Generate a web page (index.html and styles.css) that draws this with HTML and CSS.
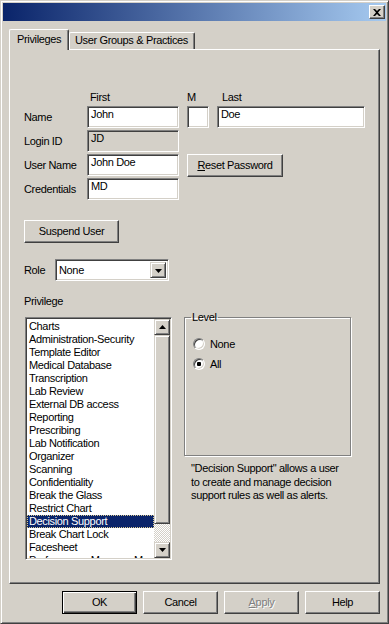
FILE: index.html
```html
<!DOCTYPE html>
<html lang="en">
<head>
    <meta charset="UTF-8">
    <meta name="viewport" content="width=device-width, initial-scale=1.0">
    <title>User Properties</title>
    <link rel="stylesheet" href="styles.css">
</head>
<body>
    <div class="window">
        <div class="titlebar">
            <span class="close">
                <svg width="8" height="7" viewBox="0 0 8 7"><path d="M0 0h2l2 2 2-2h2L5 3.5 8 7H6L4 5 2 7H0l3-3.5z" fill="#000"/></svg>
            </span>
        </div>

        <div class="tabs">
            <div class="tab active">Privileges</div>
            <div class="tab">User Groups &amp; Practices</div>
        </div>

        <div class="panel">
            <div class="ident">
                <span></span>
                <span class="head first-head">First</span>
                <span class="head">M</span>
                <span class="head last-head">Last</span>

                <label>Name</label>
                <div class="field w-first">John</div>
                <div class="field w-mid"></div>
                <div class="field w-last">Doe</div>

                <label>Login ID</label>
                <div class="field w-first disabled">JD</div>

                <label>User Name</label>
                <div class="field w-first">John Doe</div>
                <button type="button" class="btn reset"><u>R</u>eset Password</button>

                <label>Credentials</label>
                <div class="field w-first">MD</div>
            </div>

            <button type="button" class="btn suspend">Suspend User</button>

            <div class="role">
                <label>Role</label>
                <div class="select">
                    <span class="select-text">None</span>
                    <span class="arrow-btn">
                        <svg width="7" height="4" viewBox="0 0 7 4"><path d="M0 0h7L3.5 4z" fill="#000"/></svg>
                    </span>
                </div>
            </div>

            <div class="priv-label">Privilege</div>

            <div class="priv-row">
                <div class="listbox">
                    <ul class="items">
                        <li>Charts</li>
                        <li>Administration-Security</li>
                        <li>Template Editor</li>
                        <li>Medical Database</li>
                        <li>Transcription</li>
                        <li>Lab Review</li>
                        <li>External DB access</li>
                        <li>Reporting</li>
                        <li>Prescribing</li>
                        <li>Lab Notification</li>
                        <li>Organizer</li>
                        <li>Scanning</li>
                        <li>Confidentiality</li>
                        <li>Break the Glass</li>
                        <li>Restrict Chart</li>
                        <li class="selected">Decision Support</li>
                        <li>Break Chart Lock</li>
                        <li>Facesheet</li>
                        <li>Performance Measure Manager</li>
                    </ul>
                    <div class="scrollbar">
                        <span class="sb-btn">
                            <svg width="7" height="4" viewBox="0 0 7 4"><path d="M0 4h7L3.5 0z" fill="#000"/></svg>
                        </span>
                        <span class="sb-thumb"></span>
                        <span class="sb-track"></span>
                        <span class="sb-btn">
                            <svg width="7" height="4" viewBox="0 0 7 4"><path d="M0 0h7L3.5 4z" fill="#000"/></svg>
                        </span>
                    </div>
                </div>

                <div class="right-col">
                    <fieldset class="level">
                        <legend>Level</legend>
                        <div class="radio-row"><span class="radio"></span>None</div>
                        <div class="radio-row"><span class="radio checked"></span>All</div>
                    </fieldset>
                    <p class="desc">"Decision Support" allows a user<br>to create and manage decision<br>support rules as well as alerts.</p>
                </div>
            </div>
        </div>

        <div class="actions">
            <button type="button" class="btn default">OK</button>
            <button type="button" class="btn">Cancel</button>
            <button type="button" class="btn" disabled><u>A</u>pply</button>
            <button type="button" class="btn">Help</button>
        </div>
    </div>
</body>
</html>
```

FILE: styles.css
```css
*{
    box-sizing: border-box;
}
body{
    margin: 0;
    font-family: "Liberation Sans", Arial, sans-serif;
    font-size: 11px;
    letter-spacing: -0.35px;
    color: #000;
}
.window{
    width: 389px;
    height: 624px;
    background-color: #d4d0c8;
    border: 1px solid;
    border-color: #d4d0c8 #404040 #404040 #d4d0c8;
    box-shadow: inset 1px 1px #fff, inset -1px -1px #808080;
    padding: 2px;
}

/* title bar */
.titlebar{
    height: 18px;
    background: linear-gradient(to right, #0a246a, #a6caf0);
    display: flex;
    justify-content: flex-end;
    align-items: center;
    padding-right: 1px;
}
.close{
    width: 16px;
    height: 14px;
    background-color: #d4d0c8;
    border: 1px solid;
    border-color: #fff #404040 #404040 #fff;
    box-shadow: inset -1px -1px #808080;
    display: flex;
    justify-content: center;
    align-items: center;
}

/* tabs */
.tabs{
    display: flex;
    align-items: flex-end;
    margin: 8px 0 -1px 6px;
    height: 21px;
}
.tab{
    height: 17px;
    margin-bottom: 1px;
    border: 1px solid #fff;
    border-right-color: #404040;
    border-bottom: none;
    border-radius: 2px 2px 0 0;
    box-shadow: inset -1px 0 #808080;
    background-color: #d4d0c8;
    line-height: 15px;
    padding-left: 5px;
    width: 126px;
}
.tab.active{
    position: relative;
    z-index: 1;
    height: 21px;
    margin-bottom: 0;
    width: 60px;
    padding: 2px 0 0 7px;
    line-height: 14px;
}

/* panel */
.panel{
    height: 535px;
    margin: 0 6px;
    border: 1px solid;
    border-color: #fff #404040 #404040 #fff;
    box-shadow: inset -1px -1px #808080;
    padding: 41px 0 0 14px;
}
.ident{
    display: grid;
    grid-template-columns: 63px 100px 30px 148px;
    grid-template-rows: 13px repeat(4, 22px);
    row-gap: 2px;
    align-items: center;
    line-height: 13px;
}
.ident label{
    grid-column: 1;
}
.head{
    align-self: start;
}
.first-head{
    padding-left: 3px;
}
.last-head{
    padding-left: 5px;
}
.field{
    height: 22px;
    background-color: #fff;
    border: 1px solid;
    border-color: #808080 #fff #fff #808080;
    box-shadow: inset 1px 1px #404040, inset -1px -1px #d4d0c8;
    padding: 1px 0 0 3px;
    line-height: 13px;
    white-space: nowrap;
}
.field.disabled{
    background-color: #d4d0c8;
}
.w-first{
    width: 92px;
}
.w-mid{
    width: 22px;
}
.w-last{
    width: 148px;
}

/* buttons */
.btn{
    font: inherit;
    letter-spacing: inherit;
    color: #000;
    height: 23px;
    background-color: #d4d0c8;
    border: 1px solid;
    border-color: #fff #404040 #404040 #fff;
    box-shadow: inset -1px -1px #808080;
    border-radius: 0;
    padding: 0;
    line-height: 13px;
}
.btn u{
    text-decoration: underline;
}
.reset{
    grid-column: 3 / 5;
    width: 96px;
    justify-self: start;
}
.suspend{
    display: block;
    width: 95px;
    margin-top: 20px;
}
.btn.default{
    border-color: #000;
    box-shadow: inset 1px 1px #fff, inset -1px -1px #404040, inset -2px -2px #808080;
}
.btn:disabled{
    color: #808080;
    text-shadow: 1px 1px #fff;
}

/* role */
.role{
    display: flex;
    align-items: center;
    margin-top: 16px;
    line-height: 13px;
}
.role label{
    width: 31px;
}
.select{
    width: 114px;
    height: 22px;
    background-color: #fff;
    border: 1px solid;
    border-color: #808080 #fff #fff #808080;
    box-shadow: inset 1px 1px #404040, inset -1px -1px #d4d0c8;
    padding: 2px;
    display: flex;
    align-items: stretch;
}
.select-text{
    flex: 1;
    padding: 2px 0 0 1px;
}
.arrow-btn,
.sb-btn{
    width: 16px;
    background-color: #d4d0c8;
    border: 1px solid;
    border-color: #d4d0c8 #404040 #404040 #d4d0c8;
    box-shadow: inset 1px 1px #fff, inset -1px -1px #808080;
    display: flex;
    justify-content: center;
    align-items: center;
}
.arrow-btn svg{
    margin-top: 1px;
}

.priv-label{
    margin-top: 14px;
    line-height: 13px;
}

/* privilege list + level */
.priv-row{
    display: flex;
    align-items: flex-start;
    margin-top: 3px;
}
.listbox{
    width: 147px;
    height: 243px;
    margin: 6px 0 0 1px;
    background-color: #fff;
    border: 1px solid;
    border-color: #808080 #fff #fff #808080;
    box-shadow: inset 1px 1px #404040, inset -1px -1px #d4d0c8;
    padding: 1px;
    display: flex;
}
.items{
    list-style: none;
    margin: 0;
    padding: 1px 0 0;
    flex: 1;
    overflow: hidden;
    line-height: 13px;
}
.items li{
    height: 13px;
    padding-left: 2px;
    white-space: nowrap;
}
.items li.selected{
    background-color: #0a246a;
    color: #fff;
    outline: 1px dotted #d8c890;
    outline-offset: -1px;
}
.scrollbar{
    width: 16px;
    display: flex;
    flex-direction: column;
}
.sb-btn{
    height: 16px;
}
.sb-thumb{
    height: 189px;
    background-color: #d4d0c8;
    border: 1px solid;
    border-color: #d4d0c8 #404040 #404040 #d4d0c8;
    box-shadow: inset 1px 1px #fff, inset -1px -1px #808080;
}
.sb-track{
    flex: 1;
    background: repeating-conic-gradient(#d4d0c8 0 25%, #fff 0 50%) 0 0 / 2px 2px;
}

.right-col{
    margin-left: 12px;
    width: 167px;
}
.level{
    height: 145px;
    margin: 0;
    border: 1px solid #808080;
    box-shadow: 1px 1px #fff, inset 1px 1px #fff;
    padding: 10px 0 0 8px;
    line-height: 13px;
}
.level legend{
    padding: 0 1px;
    margin-left: -2px;
}
.radio-row{
    height: 20px;
    display: flex;
    align-items: center;
    gap: 5px;
}
.radio{
    width: 12px;
    height: 12px;
    border-radius: 50%;
    border: 1px solid;
    border-color: #808080 #fff #fff #808080;
    box-shadow: inset 1px 1px #404040, inset -1px -1px #d4d0c8;
    background-color: #fff;
}
.radio.checked{
    background: radial-gradient(circle, #000 0 2px, #fff 2.5px);
}
.desc{
    margin: 6px 0 0 7px;
    line-height: 13.5px;
    white-space: nowrap;
}

/* bottom buttons */
.actions{
    display: flex;
    justify-content: flex-end;
    gap: 6px;
    margin-top: 7px;
    padding-right: 6px;
}
.actions .btn{
    width: 75px;
}
```
